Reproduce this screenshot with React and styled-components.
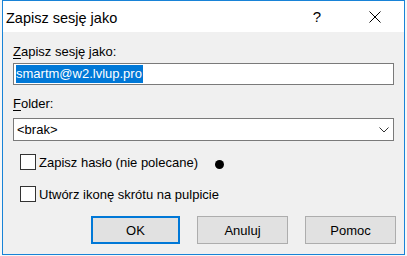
import React from 'react';
import styled, { createGlobalStyle } from 'styled-components';

const Global = createGlobalStyle`
  html, body {
    margin: 0;
    padding: 0;
    background: #f7f7f7;
    font-family: "Liberation Sans", Arial, sans-serif;
  }
  body {
    padding-left: 2px;
  }
`;

const Dialog = styled.div`
  width: 401px;
  height: 253px;
  border: 1px solid #1883d7;
  background: #f0f0f0;
  display: flex;
  flex-direction: column;
  color: #000;
`;

const TitleBar = styled.div`
  height: 31px;
  background: #fff;
  display: flex;
  align-items: center;
  padding-left: 3px;
`;

const Title = styled.div`
  flex: 1;
  font-size: 14.5px;
  padding-top: 2px;
`;

const TitleButton = styled.div`
  width: ${p => p.w}px;
  margin-left: ${p => p.ml || 0}px;
  height: 31px;
  display: flex;
  align-items: center;
  justify-content: center;
  font-size: 15px;
`;

const Body = styled.div`
  padding: 12px 10px 0 10px;
  display: flex;
  flex-direction: column;
`;

const Label = styled.div`
  font-size: 13px;
  line-height: 15px;
  margin-bottom: ${p => p.mb}px;
  u { text-decoration-thickness: 1px; text-underline-offset: 2px; }
`;

const TextBox = styled.div`
  height: 20px;
  border: 1px solid #7a7a7a;
  background: #fff;
  display: flex;
  align-items: center;
  padding-left: 2px;
  margin-bottom: 11px;
`;

const Selected = styled.span`
  background: #0078d7;
  color: #fff;
  font-size: 13px;
  line-height: 18px;
  padding-right: 1px;
`;

const Select = styled.div`
  height: 21px;
  border: 1px solid #7a7a7a;
  background: #fff;
  display: flex;
  align-items: center;
  justify-content: space-between;
  padding: 0 4px 0 3px;
  font-size: 13px;
  margin-bottom: 13px;
`;

const CheckRow = styled.div`
  display: flex;
  align-items: center;
  gap: 3px;
  padding-left: 7px;
  font-size: 13px;
  height: 16px;
  margin-bottom: ${p => p.mb}px;
`;

const Box = styled.div`
  width: 14px;
  height: 14px;
  border: 1px solid #333;
  background: #fff;
`;

const Dot = styled.span`
  width: 9px;
  height: 9px;
  border-radius: 50%;
  background: #000;
  margin-left: 14px;
  margin-top: 5px;
`;

const Buttons = styled.div`
  display: flex;
  justify-content: flex-end;
  gap: 17px;
  margin-right: -2px;
`;

const Button = styled.div`
  width: ${p => (p.primary ? 85 : 89)}px;
  height: ${p => (p.primary ? 24 : 26)}px;
  border: ${p => (p.primary ? '2px solid #0078d7' : '1px solid #adadad')};
  background: #e1e1e1;
  display: flex;
  align-items: center;
  justify-content: center;
  font-size: 13px;
`;

const Chevron = () => (
  <svg width="10" height="6" viewBox="0 0 10 6">
    <path d="M0.5 0.5 L5 5 L9.5 0.5" fill="none" stroke="#333" strokeWidth="1" />
  </svg>
);

const CloseIcon = () => (
  <svg width="12" height="12" viewBox="0 0 12 12">
    <path d="M0.5 0.5 L11.5 11.5 M11.5 0.5 L0.5 11.5" stroke="#000" strokeWidth="1" />
  </svg>
);

const App = () => (
  <>
    <Global />
    <Dialog>
      <TitleBar>
        <Title>Zapisz sesję jako</Title>
        <TitleButton w={46}>?</TitleButton>
        <TitleButton w={58} ml={6}>
          <CloseIcon />
        </TitleButton>
      </TitleBar>
      <Body>
        <Label mb={4}>
          <u>Z</u>apisz sesję jako:
        </Label>
        <TextBox>
          <Selected>smartm@w2.lvlup.pro</Selected>
        </TextBox>
        <Label mb={7}>
          <u>F</u>older:
        </Label>
        <Select>
          <span>&lt;brak&gt;</span>
          <Chevron />
        </Select>
        <CheckRow mb={16}>
          <Box />
          <span>Zapisz hasło (nie polecane)</span>
          <Dot />
        </CheckRow>
        <CheckRow mb={14}>
          <Box />
          <span>Utwórz ikonę skrótu na pulpicie</span>
        </CheckRow>
        <Buttons>
          <Button primary>OK</Button>
          <Button>Anuluj</Button>
          <Button>Pomoc</Button>
        </Buttons>
      </Body>
    </Dialog>
  </>
);

export default App;
